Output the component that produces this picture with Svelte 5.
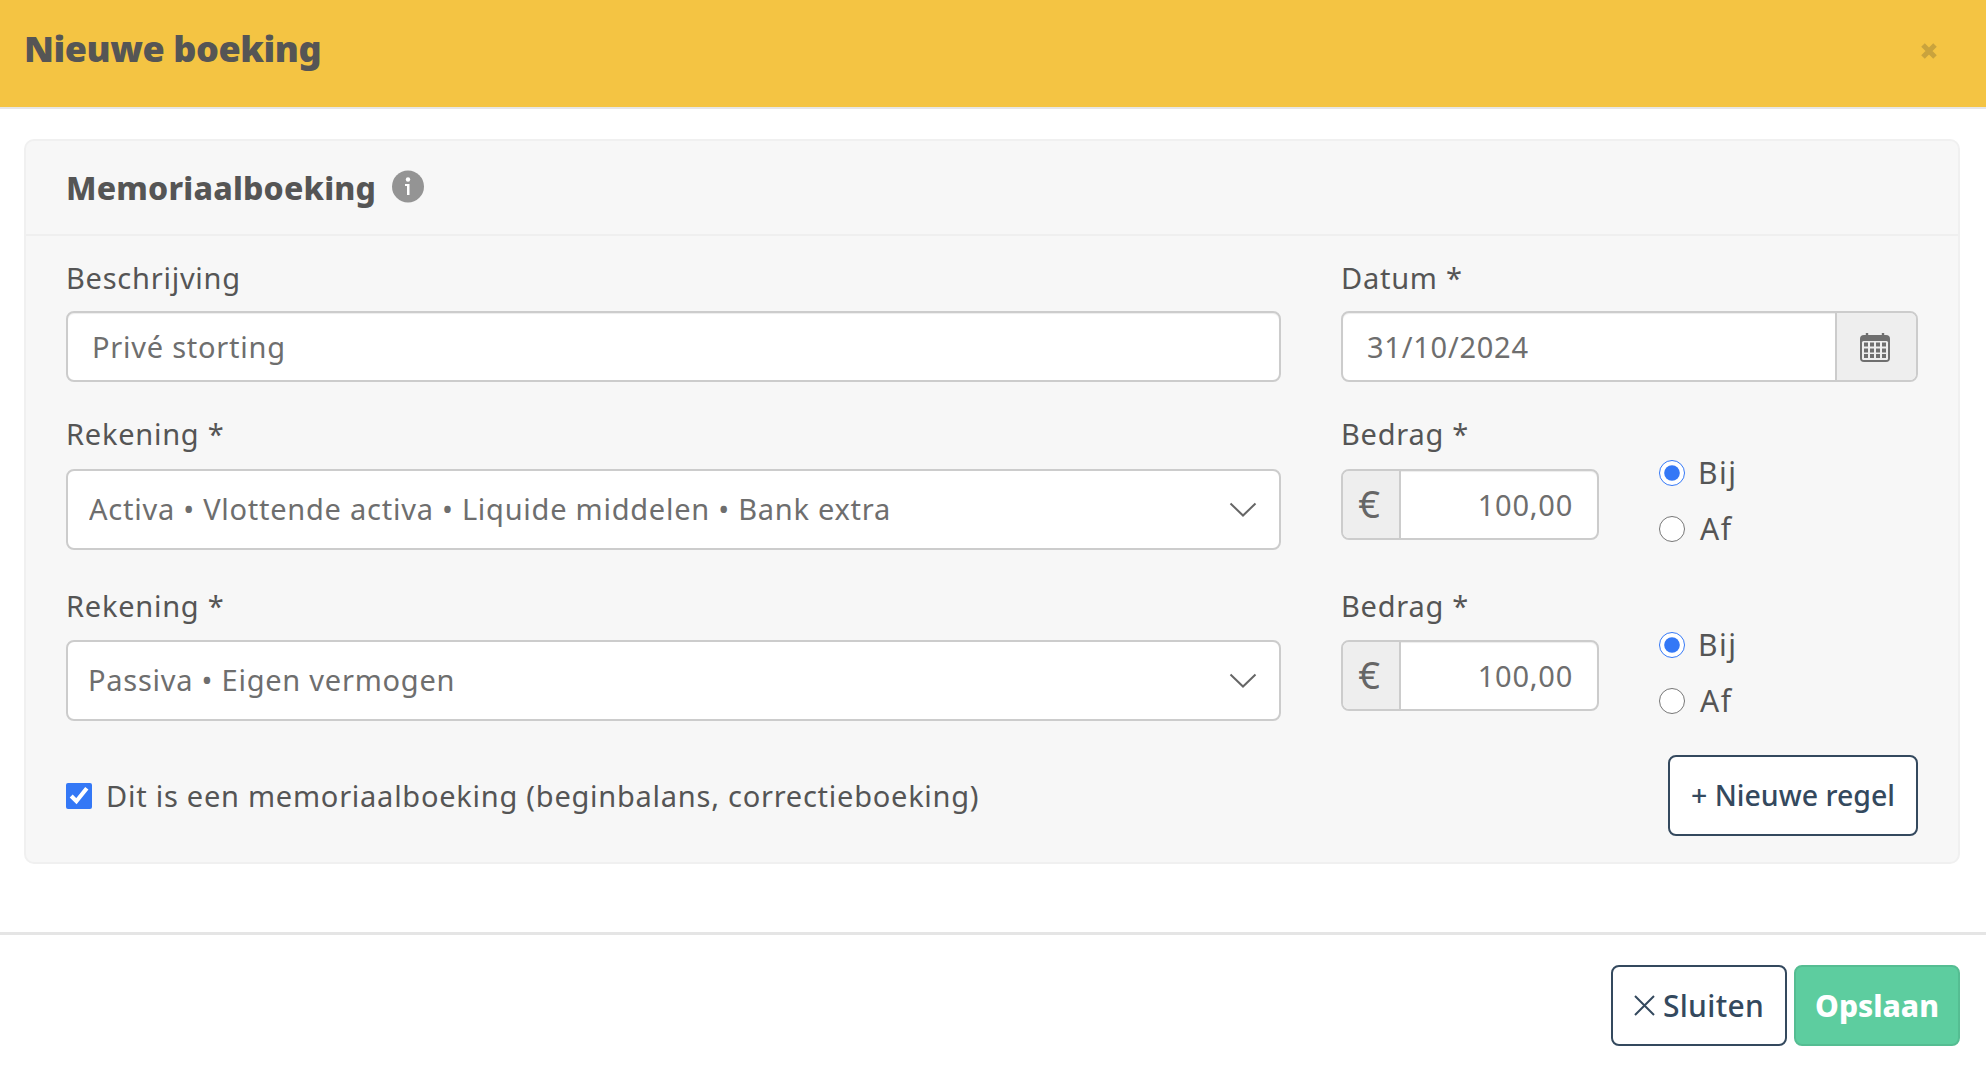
<script>
  const rows = [
    { id: 'a', value: 'Activa • Vlottende activa • Liquide middelen • Bank extra', pad: 'p1' },
    { id: 'b', value: 'Passiva • Eigen vermogen', pad: 'p2' }
  ];
</script>

<div class="page">
  <header class="top">
    <h1>Nieuwe boeking</h1>
    <button class="close" aria-label="Sluiten">
      <svg width="18" height="18" viewBox="0 0 18 18"><path d="M3 3l12 12M15 3L3 15" stroke="#c9a33d" stroke-width="5" fill="none"/></svg>
    </button>
  </header>

  <section class="card">
    <div class="card-head">
      <h2>Memoriaalboeking</h2>
      <svg class="info" width="32" height="33" viewBox="0 0 32 33" aria-hidden="true">
        <circle cx="16" cy="16.5" r="16" fill="#949494"/>
        <circle cx="16" cy="9.5" r="2.2" fill="#fff"/>
        <path d="M13 14h4.5v11h-2.5v-9h-2z" fill="#fff"/>
      </svg>
    </div>

    <div class="card-body">
      <div class="row first">
        <div class="col">
          <label for="desc">Beschrijving</label>
          <input id="desc" class="ctl" value="Privé storting" />
        </div>
        <div class="col">
          <label for="date">Datum *</label>
          <div class="group">
            <input id="date" value="31/10/2024" />
            <span class="addon cal">
              <svg width="32" height="32" viewBox="0 0 32 32" aria-hidden="true">
                <path d="M8 2v5M24 2v5" stroke="#6f6f6f" stroke-width="2.4"/>
                <rect x="1" y="4" width="30" height="27" rx="4" fill="#6f6f6f"/>
                <rect x="3" y="10" width="26" height="19" rx="1.5" fill="#eee"/>
                {#each [11.5, 17.5, 23] as y}
                  {#each [5, 11, 17, 23] as x}
                    <rect {x} {y} width="4" height="4" fill="#6f6f6f"/>
                  {/each}
                {/each}
              </svg>
            </span>
          </div>
        </div>
      </div>

      {#each rows as r, i}
        <div class="row entry {r.pad}">
          <div class="col">
            <label for="sel-{r.id}">Rekening *</label>
            <div class="select-wrap">
              <select id="sel-{r.id}" class={r.pad}>
                <option>{r.value}</option>
              </select>
              <svg class="chev" width="28" height="15" viewBox="0 0 28 15" aria-hidden="true"><path d="M1.5 1.5L14 13.5L26.5 1.5" fill="none" stroke="#666" stroke-width="2"/></svg>
            </div>
          </div>
          <div class="col amount">
            <div class="amount-box">
              <label for="amt-{r.id}">Bedrag *</label>
              <div class="group money">
                <span class="addon euro">€</span>
                <input id="amt-{r.id}" value="100,00" />
              </div>
            </div>
            <div class="radios">
              <label class="radio"><input type="radio" name="dir-{r.id}" checked /> <span>Bij</span></label>
              <label class="radio"><input type="radio" name="dir-{r.id}" /> <span class="af">Af</span></label>
            </div>
          </div>
        </div>
      {/each}

      <div class="row last">
        <label class="check"><input type="checkbox" checked /> <span>Dit is een memoriaalboeking (beginbalans, correctieboeking)</span></label>
        <button class="btn add">+ Nieuwe regel</button>
      </div>
    </div>
  </section>

  <footer class="foot">
    <button class="btn sluiten">
      <svg width="21" height="21" viewBox="0 0 21 21" aria-hidden="true"><path d="M1 1l19 19M20 1L1 20" stroke="#34495e" stroke-width="2" fill="none"/></svg>
      Sluiten
    </button>
    <button class="btn opslaan">Opslaan</button>
  </footer>
</div>

<style>
  :global(body) {
    margin: 0;
    background: #fff;
  }
  .page {
    font-family: "Noto Sans", "Open Sans", sans-serif;
    color: #555;
    font-size: 29px;
    letter-spacing: 0.75px;
  }
  .top {
    box-sizing: content-box;
    height: 97px;
    background: #f4c443;
    border-bottom: 2px solid #e6e6e6;
    display: flex;
    align-items: center;
    justify-content: space-between;
    padding: 0 48px 10px 24px;
  }
  h1 {
    margin: 0;
    font-size: 36px;
    font-weight: 900;
    color: #555;
    letter-spacing: -0.45px;
    line-height: 50px;
  }
  .close {
    background: none;
    border: 0;
    padding: 0;
    display: flex;
    margin-top: 5px;
  }
  .card {
    margin: 30px 26px 0 24px;
    background: #f7f7f7;
    border: 2px solid #f0f0f0;
    border-radius: 10px;
  }
  .card-head {
    height: 93px;
    border-bottom: 2px solid #efefef;
    display: flex;
    align-items: center;
    gap: 16px;
    padding: 0 40px;
  }
  h2 {
    margin: 0;
    font-size: 32px;
    font-weight: 800;
    color: #555;
    letter-spacing: 0.2px;
  }
  .info {
    margin-bottom: 3px;
  }
  .card-body {
    padding: 27px 40px 26px 40px;
  }
  .row {
    display: grid;
    grid-template-columns: 1215px 577px;
    column-gap: 60px;
  }
  .row.p1 {
    margin-top: 37px;
  }
  .row.p2 {
    margin-top: 41px;
  }
  .col > label,
  .amount-box > label {
    display: block;
    line-height: 30px;
    margin-bottom: 18px;
  }
  .row.p1 .col > label,
  .row.p1 .amount-box > label {
    margin-bottom: 20px;
  }
  .row.p2 .col > label,
  .row.p2 .amount-box > label {
    margin-bottom: 19px;
  }
  input,
  select,
  button {
    font-family: inherit;
    letter-spacing: inherit;
  }
  .ctl,
  .group {
    box-sizing: border-box;
    height: 71px;
    width: 100%;
    border: 2px solid #ccc;
    border-radius: 8px;
    background: #fff;
    overflow: hidden;
    box-shadow: inset 0 1px 1px rgba(0, 0, 0, 0.075);
  }
  .ctl {
    display: block;
    padding: 0 24px;
    font-size: 29px;
    color: #6e6e6e;
  }
  .group {
    display: flex;
  }
  .group input {
    flex: 1;
    min-width: 0;
    border: 0;
    background: transparent;
    padding: 0 24px;
    font-size: 29px;
    color: #6e6e6e;
  }
  .addon {
    display: flex;
    align-items: center;
    justify-content: center;
    background: #eee;
  }
  .cal {
    box-sizing: border-box;
    width: 81px;
    border-left: 2px solid #ccc;
    padding-right: 3px;
  }
  .select-wrap {
    position: relative;
  }
  select {
    display: block;
    box-sizing: border-box;
    width: 100%;
    height: 81px;
    appearance: none;
    background: #fff;
    border: 2px solid #ccc;
    border-radius: 8px;
    font-size: 29px;
    color: #6e6e6e;
  }
  select.p1 {
    padding: 0 60px 2px 21px;
  }
  select.p2 {
    padding: 0 60px 2px 20px;
  }
  .chev {
    position: absolute;
    right: 24px;
    top: 33px;
    pointer-events: none;
  }
  .amount {
    display: flex;
  }
  .amount-box {
    width: 258px;
    margin-right: 60px;
  }
  .money .euro {
    box-sizing: border-box;
    width: 58px;
    border-right: 2px solid #ccc;
    padding: 0 4px 3px 0;
    font-size: 38px;
    letter-spacing: 0;
    color: #666;
  }
  .money input {
    text-align: right;
    padding: 0 24px 0 0;
  }
  .radios {
    display: flex;
    flex-direction: column;
    gap: 26px;
    padding-top: 39px;
  }
  .radio {
    display: flex;
    align-items: center;
    gap: 13px;
    line-height: 30px;
    height: 30px;
    font-size: 30px;
    letter-spacing: 1.5px;
  }
  .radio .af {
    margin-left: 2px;
  }
  .radio input {
    width: 26px;
    height: 26px;
    margin: 0;
    accent-color: #3478f6;
  }
  .row.last {
    margin-top: 34px;
    grid-template-columns: 1fr auto;
    column-gap: 0;
    align-items: center;
  }
  .check {
    display: flex;
    align-items: center;
    gap: 14px;
  }
  .check input {
    width: 26px;
    height: 26px;
    margin: 0;
    accent-color: #3478f6;
  }
  .btn {
    box-sizing: border-box;
    height: 81px;
    border-radius: 8px;
    font-size: 28.5px;
    font-weight: 500;
    letter-spacing: 0;
    display: flex;
    align-items: center;
    justify-content: center;
  }
  .add {
    width: 250px;
    padding-bottom: 3px;
    background: #fff;
    border: 2px solid #34495e;
    color: #34495e;
  }
  .foot {
    margin-top: 68px;
    border-top: 3px solid #e5e5e5;
    padding: 30px 26px 0 0;
    display: flex;
    justify-content: flex-end;
    gap: 7px;
  }
  .sluiten {
    width: 176px;
    gap: 8px;
    font-size: 30px;
    letter-spacing: 0.3px;
    background: #fff;
    border: 2px solid #34495e;
    color: #34495e;
  }
  .opslaan {
    width: 166px;
    font-size: 30px;
    background: #5dcd9f;
    border: 2px solid #55bd92;
    color: #fff;
    font-weight: 800;
  }
</style>
